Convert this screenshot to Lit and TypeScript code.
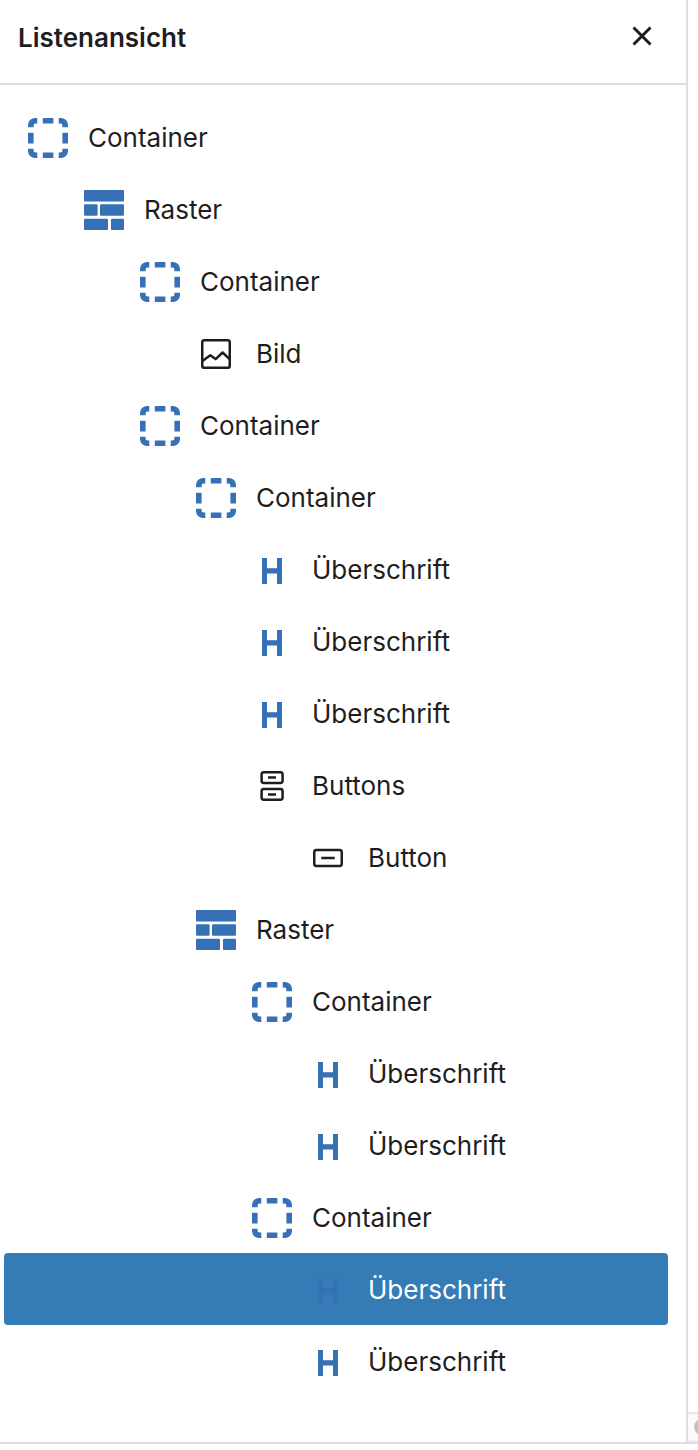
import { LitElement, html, css, svg, TemplateResult } from "lit";
import { customElement, property, state } from "lit/decorators.js";
import { classMap } from "lit/directives/class-map.js";
import { styleMap } from "lit/directives/style-map.js";

type Kind = "container" | "grid" | "image" | "heading" | "buttons" | "button";

interface Block {
  kind: Kind;
  level: number;
}

const LABELS: Record<Kind, string> = {
  container: "Container",
  grid: "Raster",
  image: "Bild",
  heading: "Überschrift",
  buttons: "Buttons",
  button: "Button",
};

const BLOCKS: Block[] = [
  { kind: "container", level: 0 },
  { kind: "grid", level: 1 },
  { kind: "container", level: 2 },
  { kind: "image", level: 3 },
  { kind: "container", level: 2 },
  { kind: "container", level: 3 },
  { kind: "heading", level: 4 },
  { kind: "heading", level: 4 },
  { kind: "heading", level: 4 },
  { kind: "buttons", level: 4 },
  { kind: "button", level: 5 },
  { kind: "grid", level: 3 },
  { kind: "container", level: 4 },
  { kind: "heading", level: 5 },
  { kind: "heading", level: 5 },
  { kind: "container", level: 4 },
  { kind: "heading", level: 5 },
  { kind: "heading", level: 5 },
];

const INDENT = 56;

const SHAPES: Record<Kind, TemplateResult> = {
  container: svg`<g fill="#3671b8">
    <path d="M0 9.3V7a7 7 0 0 1 7-7h2.3v5.6H7.6a2 2 0 0 0-2 2v1.7z"/>
    <path d="M30.7 0H33a7 7 0 0 1 7 7v2.3h-5.6V7.6a2 2 0 0 0-2-2h-1.7z"/>
    <path d="M40 30.7V33a7 7 0 0 1-7 7h-2.3v-5.6h1.7a2 2 0 0 0 2-2v-1.7z"/>
    <path d="M9.3 40H7a7 7 0 0 1-7-7v-2.3h5.6v1.7a2 2 0 0 0 2 2h1.7z"/>
    <path d="M14.8 0h10.6v5.6H14.8zM14.8 34.4h10.6V40H14.8zM0 14.8h5.6v10.6H0zM34.4 14.8H40v10.6h-5.6z"/>
  </g>`,
  grid: svg`<g fill="#3671b8">
    <rect width="40" height="11.6" rx="1"/>
    <rect y="14.2" width="13.6" height="11.6" rx="1"/>
    <rect x="16" y="14.2" width="24" height="11.6" rx="1"/>
    <rect y="28.7" width="24" height="11.3" rx="1"/>
    <rect x="27" y="28.7" width="13" height="11.3" rx="1"/>
  </g>`,
  image: svg`<g fill="none" stroke="#1e1e1e" stroke-width="2.5">
    <rect x="6.25" y="6.25" width="27.5" height="27.5" rx="2.1"/>
    <path d="M6.5 27l7.8-5.7 5.3 3.8 7-6.6 7 6.7" stroke-linejoin="round"/>
  </g>`,
  heading: svg`<path fill="#3671b8" d="M10 8h5v10.2h10V8h5v26h-5V23.4H15V34h-5z"/>`,
  buttons: svg`<g fill="none" stroke="#1e1e1e" stroke-width="2.5">
    <rect x="9.6" y="6.3" width="21" height="10.6" rx="2.2"/>
    <rect x="9.6" y="23.1" width="21" height="10.6" rx="2.2"/>
    <path d="M16 11.6h8M16 28.4h8"/>
  </g>`,
  button: svg`<g fill="none" stroke="#1e1e1e" stroke-width="2.5">
    <rect x="6.25" y="12.1" width="27.5" height="15.8" rx="2.1"/>
    <path d="M13.3 20h13.4"/>
  </g>`,
};

@customElement("block-row")
export class BlockRow extends LitElement {
  @property() kind: Kind = "container";
  @property({ type: Number }) level = 0;
  @property({ type: Boolean }) selected = false;

  static styles = css`
    :host {
      display: block;
    }
    .row {
      display: flex;
      align-items: center;
      gap: 20px;
      box-sizing: border-box;
      height: 72px;
      padding: 2px 24px 0;
      border-radius: 4px;
      color: #1e1e1e;
      font-size: 26px;
      line-height: 36px;
      text-decoration: none;
    }
    .selected {
      background: #357bb5;
      color: #fff;
    }
    .icon {
      flex: none;
      width: 40px;
      height: 40px;
    }
  `;

  render() {
    return html`<a
      href="#"
      class=${classMap({ row: true, selected: this.selected })}
      style=${styleMap({ paddingLeft: `${24 + this.level * INDENT}px` })}
    >
      <svg class="icon" viewBox="0 0 40 40" aria-hidden="true">${SHAPES[this.kind]}</svg>
      <span>${LABELS[this.kind]}</span>
    </a>`;
  }
}

@customElement("app-root")
export class AppRoot extends LitElement {
  @state() private selected = 16;

  static styles = css`
    :host {
      display: block;
      background: #fff;
      color: #1e1e1e;
      font-family: Inter, "Liberation Sans", sans-serif;
    }
    .layout {
      display: grid;
      grid-template-columns: minmax(0, 1fr) 10px;
      border-bottom: 2px solid #dddddd;
    }
    .panel {
      border-right: 2px solid #e0e0e0;
    }
    .header {
      display: flex;
      align-items: flex-start;
      justify-content: space-between;
      padding: 12px 20px 19px 18px;
      border-bottom: 2px solid #dddddd;
    }
    .title {
      margin: 0;
      font-size: 26px;
      font-weight: 600;
      line-height: 52px;
    }
    .close {
      display: flex;
      padding: 0;
      border: 0;
      background: none;
      color: inherit;
      cursor: pointer;
    }
    .close-icon {
      width: 48px;
      height: 48px;
    }
    .list {
      margin: 0;
      padding: 16px 18px 45px 4px;
      list-style: none;
    }
    .canvas {
      display: flex;
      flex-direction: column;
      justify-content: flex-end;
      overflow: hidden;
    }
    .scrollbar {
      display: flex;
      align-items: center;
      height: 26px;
      padding-left: 6px;
      border-top: 2px solid #e8e8e8;
      border-bottom: 2px solid #ededed;
      background: #fafafa;
    }
    .thumb {
      flex: none;
      width: 120px;
      height: 16px;
      border-radius: 8px;
      background: #c1c1c1;
    }
  `;

  render() {
    return html`<div class="layout">
      <section class="panel" aria-labelledby="title">
        <header class="header">
          <h2 class="title" id="title">Listenansicht</h2>
          <button class="close" type="button" aria-label="Schließen">
            <svg class="close-icon" viewBox="0 0 48 48" aria-hidden="true">
              <path d="M15.5 15.5l17 17M32.5 15.5l-17 17" stroke="currentColor" stroke-width="3" />
            </svg>
          </button>
        </header>
        <ul class="list">
          ${BLOCKS.map(
            (block, index) => html`<li>
              <block-row
                .kind=${block.kind}
                .level=${block.level}
                .selected=${index === this.selected}
                @click=${(event: Event) => {
                  event.preventDefault();
                  this.selected = index;
                }}
              ></block-row>
            </li>`
          )}
        </ul>
      </section>
      <div class="canvas">
        <div class="scrollbar"><div class="thumb"></div></div>
      </div>
    </div>`;
  }
}
